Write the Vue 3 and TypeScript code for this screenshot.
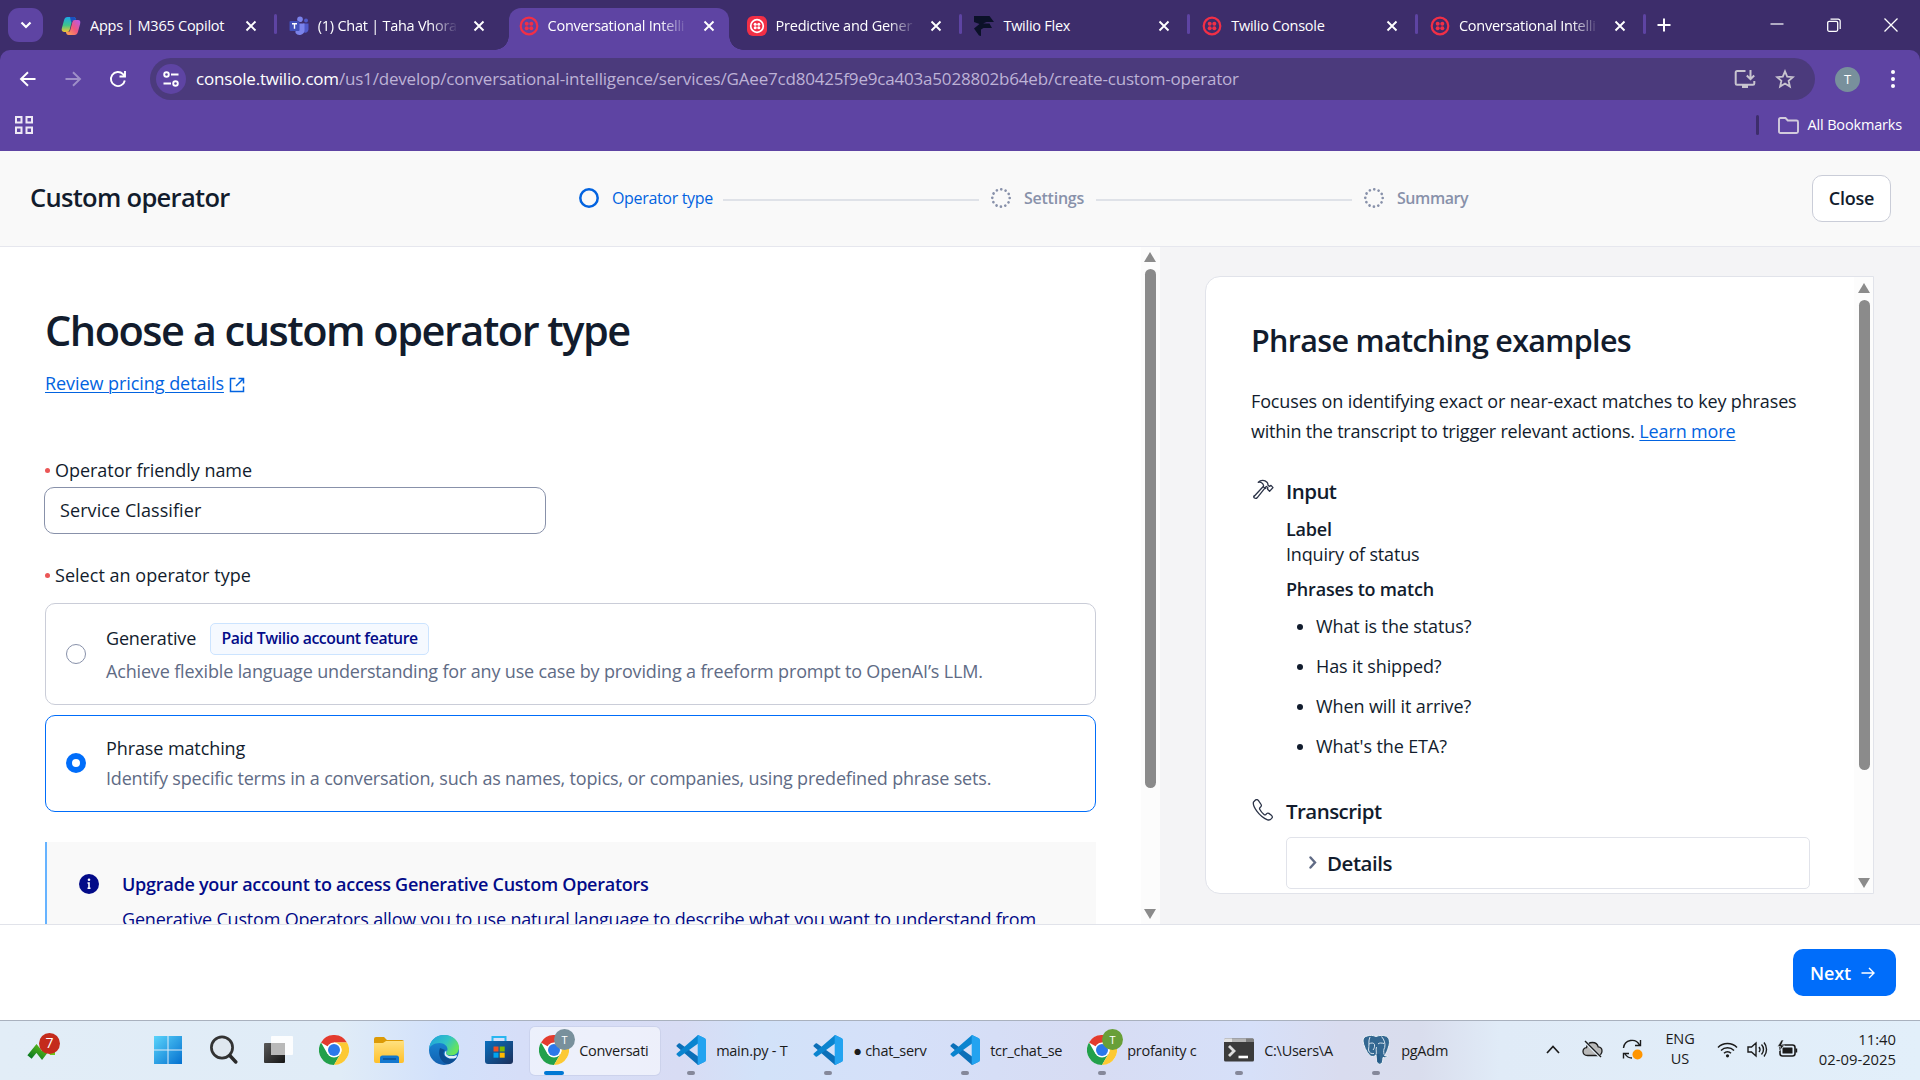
<script setup lang="ts">
interface Tab {
  title: string
  icon: string
  active?: boolean
  divider?: boolean
  faded?: boolean
}

interface Task {
  label: string
  icon: string
  badge?: string
  badgeTone?: string
  active?: boolean
}

const tabs: Tab[] = [
  { title: 'Apps | M365 Copilot', icon: 'copilot', divider: true },
  { title: '(1) Chat | Taha Vhora', icon: 'teams', faded: true },
  { title: 'Conversational Intelli', icon: 'twilio', active: true, faded: true },
  { title: 'Predictive and Gener', icon: 'twilio-solid', divider: true, faded: true },
  { title: 'Twilio Flex', icon: 'flex', divider: true },
  { title: 'Twilio Console', icon: 'twilio', divider: true },
  { title: 'Conversational Intelli', icon: 'twilio', divider: true, faded: true },
]

const pinned: string[] = ['windows', 'search', 'taskview', 'chrome', 'explorer', 'edge', 'store']

const tasks: Task[] = [
  { label: 'Conversati', icon: 'chrome', badge: 'T', badgeTone: 'slate', active: true },
  { label: 'main.py - T', icon: 'vscode' },
  { label: '● chat_serv', icon: 'vscode' },
  { label: 'tcr_chat_se', icon: 'vscode' },
  { label: 'profanity c', icon: 'chrome', badge: 'T', badgeTone: 'green' },
  { label: 'C:\\Users\\A', icon: 'terminal' },
  { label: 'pgAdm', icon: 'pgadmin' },
]

const phrases: string[] = ['What is the status?', 'Has it shipped?', 'When will it arrive?', "What's the ETA?"]
</script>

<template>
  <div class="screen">
    <svg class="sprite" aria-hidden="true">
      <defs>
        <linearGradient id="cpA" x1="0" y1="0" x2="0" y2="1"><stop offset="0" stop-color="#1ba7e8" /><stop offset=".55" stop-color="#3fc48a" /><stop offset="1" stop-color="#f5c531" /></linearGradient>
        <linearGradient id="cpB" x1="1" y1="0" x2="0" y2="1"><stop offset="0" stop-color="#b05cf0" /><stop offset=".5" stop-color="#f0567f" /><stop offset="1" stop-color="#ffb04a" /></linearGradient>
        <linearGradient id="winG" x1="0" y1="0" x2="1" y2="1"><stop offset="0" stop-color="#5ad4fb" /><stop offset="1" stop-color="#0470cf" /></linearGradient>
        <linearGradient id="dkG" x1="0" y1="0" x2="1" y2="1"><stop offset="0" stop-color="#5a5a5a" /><stop offset="1" stop-color="#151515" /></linearGradient>
        <linearGradient id="foG" x1="0" y1="0" x2="0" y2="1"><stop offset="0" stop-color="#ffe180" /><stop offset="1" stop-color="#ffc02a" /></linearGradient>
        <linearGradient id="edA" x1="0" y1="0" x2="1" y2=".5"><stop offset="0" stop-color="#1d9fe0" /><stop offset=".6" stop-color="#32c4c4" /><stop offset="1" stop-color="#66e45c" /></linearGradient>
        <linearGradient id="edB" x1="0" y1="0" x2="0" y2="1"><stop offset="0" stop-color="#1b8fdc" /><stop offset="1" stop-color="#1260b0" /></linearGradient>
        <linearGradient id="stG" x1="0" y1="0" x2="1" y2="1"><stop offset="0" stop-color="#0a6fbe" /><stop offset="1" stop-color="#1b2f5a" /></linearGradient>
        <linearGradient id="upG" x1="0" y1="1" x2="1" y2="0"><stop offset="0" stop-color="#0a7a22" /><stop offset="1" stop-color="#7fd314" /></linearGradient>
      </defs>
      <symbol id="i-copilot" viewBox="0 0 20 20">
        <path d="M6.500 1h6c1.300 0 1.900.7 2.200 1.700l.5 1.600h-2.600c-1 0-1.500.5-1.800 1.500L8.600 14c-.4 1.300-1.100 2-2.400 2H3C.9 16 .3 14.300.9 12.100L3.100 4C3.700 2 4.700 1 6.500 1z" fill="url(#cpA)" />
        <path d="M9 1h3.500c1.300 0 1.900.7 2.200 1.700l.5 1.600h-2.600c-1 0-1.500.5-1.800 1.500l-.5 1.500z" fill="#1b4fc0" />
        <path d="M13.500 19h-6c-1.300 0-1.900-.7-2.200-1.700L4.800 15.700h2.600c1 0 1.500-.5 1.800-1.500L11.400 6c.4-1.300 1.100-2 2.400-2H17c2.100 0 2.700 1.700 2.100 3.900L16.900 16c-.6 2-1.600 3-3.400 3z" fill="url(#cpB)" />
      </symbol>
      <symbol id="i-teams" viewBox="0 0 20 20">
        <circle cx="11" cy="3.200" r="2.800" fill="#7b83eb" /><circle cx="17" cy="4.400" r="2" fill="#5059c9" />
        <path d="M14 7.500h5.500v6a3.300 3.300 0 0 1-5.500 2.300z" fill="#5059c9" />
        <path d="M6.500 7.500h9V14a5 5 0 0 1-9 3z" fill="#7b83eb" />
        <rect x=".5" y="5" width="10" height="10" rx="1" fill="#4350b8" />
        <path d="M3 7.700h5M5.500 7.700v5" stroke="#fff" stroke-width="1.400" />
      </symbol>
      <symbol id="i-twilio" viewBox="0 0 20 20">
        <circle cx="10" cy="10" r="8.300" fill="none" stroke="#f22f46" stroke-width="2.200" />
        <g fill="#f22f46"><circle cx="7.700" cy="7.700" r="2" /><circle cx="12.300" cy="7.700" r="2" /><circle cx="7.700" cy="12.300" r="2" /><circle cx="12.300" cy="12.300" r="2" /></g>
      </symbol>
      <symbol id="i-twilio-solid" viewBox="0 0 20 20">
        <rect width="20" height="20" rx="6" fill="#f22f46" />
        <circle cx="10" cy="10" r="6.300" fill="none" stroke="#fff" stroke-width="1.700" />
        <g fill="#fff"><circle cx="8.200" cy="8.200" r="1.500" /><circle cx="11.800" cy="8.200" r="1.500" /><circle cx="8.200" cy="11.800" r="1.500" /><circle cx="11.800" cy="11.800" r="1.500" /></g>
      </symbol>
      <symbol id="i-flex" viewBox="0 0 20 20">
        <path d="M0 0h15.500L20 6h-7.500L9 7.500h6.500L18 12H9.500L7 13.500V20l-2-.5L0 12.500 5.500 8 0 6z" fill="#0b1128" />
      </symbol>
      <symbol id="i-windows" viewBox="0 0 30 30">
        <path d="M1 1h13.500v13.500H1zM15.500 1H29v13.500H15.500zM1 15.500h13.500V29H1zM15.500 15.500H29V29H15.500z" fill="url(#winG)" />
      </symbol>
      <symbol id="i-search" viewBox="0 0 30 30">
        <circle cx="14" cy="12.500" r="10.600" fill="#dfe7ef" stroke="#333" stroke-width="2.700" />
        <path d="M21.800 20.500l6 6.500" stroke="#2a2a2a" stroke-width="3.400" stroke-linecap="round" />
      </symbol>
      <symbol id="i-taskview" viewBox="0 0 30 30">
        <rect x="1" y="8" width="21" height="20" rx="1" fill="url(#dkG)" />
        <rect x="8" y="1" width="22" height="19" rx="1" fill="#fff" fill-opacity=".88" />
        <path d="M8 8h14v12H8z" fill="#b9b9b9" />
      </symbol>
      <symbol id="i-chrome" viewBox="0 0 30 30">
        <circle cx="15" cy="15" r="15" fill="#fff" />
        <path d="M15 15L2 7.500A15 15 0 0 1 28 7.500H15z" fill="#e33b2e" />
        <path d="M2 7.500A15 15 0 0 0 15 30l6.500-11.200L15 15 8.500 18.800z" fill="#22a04b" />
        <path d="M28 7.500A15 15 0 0 1 15 30l6.500-11.300A7.500 7.500 0 0 0 21.500 11L15 7.500z" fill="#fcc934" />
        <circle cx="15" cy="15" r="7.500" fill="#fff" /><circle cx="15" cy="15" r="6" fill="#2b78ea" />
      </symbol>
      <symbol id="i-explorer" viewBox="0 0 30 30">
        <path d="M0 4a2 2 0 0 1 2-2h8l3 3h15a2 2 0 0 1 2 2v5H0z" fill="#dc9a06" />
        <path d="M0 8h9l3-2h18v20a2 2 0 0 1-2 2H2a2 2 0 0 1-2-2z" fill="url(#foG)" />
        <path d="M6 28v-5a2.500 2.500 0 0 1 2.500-2.500h14A2.500 2.500 0 0 1 25 23v5z" fill="#1378cf" /><path d="M9 24h13" stroke="#0b4f94" stroke-width="1.500" />
      </symbol>
      <symbol id="i-edge" viewBox="0 0 30 30">
        <circle cx="15" cy="15" r="15" fill="url(#edB)" />
        <path d="M0 14C1 5 7 0 15 0c9 0 15 6 15 12.500 0 5-3.500 8-8 8-3 0-5-1-5-2.500 0-1 1.500-1.500 1.500-4C18.500 11 15 8 10.500 8 5 8 1 11 0 14z" fill="url(#edA)" />
        <path d="M11 13c-3 7 1.500 15.500 8.500 16.300 4-1.300 7-4 8.500-7-3.500 2-8 2.200-11 0C14 20 14 17 16 15z" fill="#0c4d92" />
        <path d="M17 18c0 3 6 4 10 2.200.8-.2 1.300.3.800 1.100l-.8 1.400C23 24.500 18 23.500 16 20.500c-1-2 0-4.500 1.500-5z" fill="#e4effa" />
      </symbol>
      <symbol id="i-store" viewBox="0 0 30 30">
        <path d="M8.500 6V2h13v4" fill="none" stroke="#29b6f0" stroke-width="2" />
        <path d="M1 6h28v20a3 3 0 0 1-3 3H4a3 3 0 0 1-3-3z" fill="url(#stG)" />
        <path d="M9.500 11.500h5v5h-5z" fill="#f25022" /><path d="M15.700 11.500h5v5h-5z" fill="#7fba00" /><path d="M9.500 17.700h5v5h-5z" fill="#00a4ef" /><path d="M15.700 17.700h5v5h-5z" fill="#ffb900" />
      </symbol>
      <symbol id="i-vscode" viewBox="0 0 30 30">
        <path d="M.7 10.200L2.600 8.500c.5-.4 1-.4 1.500 0L29 26.500 22 30 .7 11.500c-.4-.4-.4-.9 0-1.300z" fill="#0b6fb8" />
        <path d="M.7 19.800l1.900 1.700c.5.400 1 .4 1.500 0L29 3.500 22 0 .7 18.500c-.4.400-.4.900 0 1.300z" fill="#0a84cf" />
        <path d="M22 0l7 3.200c.6.300 1 .9 1 1.600v20.400c0 .7-.4 1.300-1 1.600L22 30c-.5-.3-.3-.7-.3-1.500V1.500C21.700.7 21.500.3 22 0z" fill="#23a3f0" />
      </symbol>
      <symbol id="i-terminal" viewBox="0 0 30 30">
        <rect y="3.500" width="30" height="23" rx="1.500" fill="#3b3b3b" /><path d="M1.500 3.500h27A1.500 1.500 0 0 1 30 5v2H0V5a1.500 1.500 0 0 1 1.500-1.500z" fill="#b5b5b5" /><path d="M0 5a1.500 1.500 0 0 1 1.500-1.500H8V7H0z" fill="#e2e2e2" /><path d="M22 3.500h6.500A1.500 1.500 0 0 1 30 5v2h-8z" fill="#808080" />
        <path d="M5 11l5 5-5 5" fill="none" stroke="#ddd" stroke-width="2.800" /><path d="M14.500 22h9.500" stroke="#fff" stroke-width="2.600" />
      </symbol>
      <symbol id="i-pgadmin" viewBox="0 0 30 30">
        <path d="M6 1c3-1 6-.8 9 .5C18 .3 22-.3 25.500 1.300 29 3.500 29 8 27.500 12c-.8 3-2 6-4 8.500.8.700 2.500.6 3.600.7-1 1.500-3.300 1.700-5.100 1.300-.3 2 0 5-2 6.500-2 .9-3.800-.5-4-2.500L15.300 20c-1.600 1.500-4 1.900-6 1C5 17 2.500 10 2 6 2 3 3.500 1.700 6 1z" fill="#336791" stroke="#eef3f8" stroke-width="1" />
        <path d="M9 2C7 6 8.500 10 7.500 15c.5 3 3 4 5.500 3.500M20.500 1.500c3 3.500 4 7 3.200 11-1.200 2-1.200 4-.7 7M15 20c1-3-.5-5 .5-8M8 9c2-1.500 5-1.300 5.500.5.300 2.500-.3 4-1.500 5.500M17 9c1-1.500 4-1 6-.5" fill="none" stroke="#e8eff6" stroke-width=".9" />
        <path d="M17 19l.8 8" stroke="#245a87" stroke-width="3" />
      </symbol>
    </svg>

    <div class="tabstrip">
      <button class="tab-search"><svg width="14" height="14" viewBox="0 0 14 14"><path d="M2.500 4.500L7 9l4.500-4.500" fill="none" stroke="#fff" stroke-width="2.200" /></svg></button>
      <div class="tabs">
        <div v-for="(tab, i) in tabs" :key="i" class="tab" :class="{ active: tab.active, divider: tab.divider }">
          <svg class="favicon"><use :href="'#i-' + tab.icon" /></svg>
          <span class="tab-title" :class="{ faded: tab.faded }">{{ tab.title }}</span>
          <svg class="tab-close" width="12" height="12" viewBox="0 0 12 12"><path d="M1.500 1.500l9 9M10.500 1.500l-9 9" stroke="#fff" stroke-width="1.900" /></svg>
        </div>
      </div>
      <svg class="plus" width="14" height="14" viewBox="0 0 14 14"><path d="M7 .5v13M.5 7h13" stroke="#fff" stroke-width="2" /></svg>
      <div class="window-buttons">
        <svg width="14" height="14" viewBox="0 0 14 14"><path d="M.5 6h13" stroke="#fff" stroke-width="1.200" /></svg>
        <svg width="14" height="14" viewBox="0 0 14 14"><rect x=".7" y="3.300" width="10" height="10" rx="1.500" fill="none" stroke="#fff" stroke-width="1.300" /><path d="M3.500 1.200H11a2 2 0 0 1 2.200 2V11" fill="none" stroke="#fff" stroke-width="1.200" /></svg>
        <svg width="14" height="14" viewBox="0 0 14 14"><path d="M.5 .5l13 13M13.500 .5l-13 13" stroke="#fff" stroke-width="1.300" /></svg>
      </div>
    </div>

    <div class="browser-bar">
      <div class="toolbar">
        <svg class="nav" viewBox="0 0 20 20"><path d="M17.500 10H3.500M10 3.200L3 10l7 6.800" fill="none" stroke="#fff" stroke-width="1.900" /></svg>
        <svg class="nav dim" viewBox="0 0 20 20"><path d="M2.500 10h14M10 3.200l7 6.800-7 6.800" fill="none" stroke="#fff" stroke-width="1.900" /></svg>
        <svg class="nav" viewBox="0 0 20 20"><path d="M16.800 11.500A7 7 0 1 1 15 5.200l1.500 1.600M17 2v5.500h-5.500" fill="none" stroke="#fff" stroke-width="1.900" /></svg>
        <div class="omnibox">
          <span class="site-info"><svg width="18" height="18" viewBox="0 0 18 18"><g fill="none" stroke="#fff" stroke-width="1.900"><circle cx="4.500" cy="4.500" r="2.300" /><path d="M9 4.500h7.500M1.500 13.500H9" /><circle cx="13.500" cy="13.500" r="2.300" /></g></svg></span>
          <span class="url"><b>console.twilio.com</b>/us1/develop/conversational-intelligence/services/GAee7cd80425f9e9ca403a5028802b64eb/create-custom-operator</span>
          <svg class="omni-icon" width="22" height="20" viewBox="0 0 22 20"><path d="M11.500 2H3.200C2.200 2 1.700 2.500 1.700 3.500v11c0 .8.500 1.300 1.300 1.300h16c.8 0 1.300-.5 1.300-1.300V12M16.500 1v9M12.800 6.500l3.700 3.700 3.700-3.700" fill="none" stroke="#c8c4cf" stroke-width="2" /><path d="M8 16h6v3H8z" fill="#c8c4cf" /></svg>
          <svg class="omni-icon star" width="20" height="20" viewBox="0 0 20 20"><path d="M10 2.300l2.200 5.300 5.700.5-4.300 3.700 1.300 5.700L10 14.500l-4.900 3 1.300-5.700L2.100 8.100l5.700-.5z" fill="none" stroke="#c8c4cf" stroke-width="1.800" /></svg>
        </div>
        <span class="avatar">T</span>
        <svg class="kebab" width="6" height="20" viewBox="0 0 6 20"><g fill="#fff"><circle cx="3" cy="3" r="2" /><circle cx="3" cy="10" r="2" /><circle cx="3" cy="17" r="2" /></g></svg>
      </div>
      <div class="bookmarks">
        <svg width="18" height="18" viewBox="0 0 18 18"><g fill="none" stroke="#eee9f5" stroke-width="2"><path d="M1 1h5.500v5.500H1zM11.500 1H17v5.500h-5.500zM1 11.500h5.500V17H1zM11.500 11.500H17V17h-5.500z" /></g></svg>
        <span class="bookmark-divider"></span>
        <svg width="21" height="17" viewBox="0 0 21 17"><path d="M1 2.500C1 1.500 1.500 1 2.500 1h5l2.300 2.500h8.700c1 0 1.500.5 1.500 1.500v9.500c0 1-.5 1.500-1.500 1.500h-16C1.500 16 1 15.500 1 14.500z" fill="none" stroke="#d2cbdc" stroke-width="1.900" /></svg>
        <span class="bookmark-label">All Bookmarks</span>
      </div>
    </div>

    <header class="page-header">
      <span class="page-title">Custom operator</span>
      <div class="steps">
        <svg class="ring" viewBox="0 0 20 20"><circle cx="10" cy="10" r="8.700" fill="none" stroke="#0263e0" stroke-width="2.500" /></svg>
        <span class="step-label current">Operator type</span>
        <span class="step-line"></span>
        <svg class="ring" viewBox="0 0 20 20"><circle cx="10" cy="10" r="8.700" fill="none" stroke="#8891aa" stroke-width="2.700" stroke-linecap="round" stroke-dasharray="0.010 4.545" /></svg>
        <span class="step-label settings">Settings</span>
        <span class="step-line"></span>
        <svg class="ring" viewBox="0 0 20 20"><circle cx="10" cy="10" r="8.700" fill="none" stroke="#8891aa" stroke-width="2.700" stroke-linecap="round" stroke-dasharray="0.010 4.545" /></svg>
        <span class="step-label summary">Summary</span>
      </div>
      <button class="close-button">Close</button>
    </header>

    <main class="main">
      <section class="left">
        <div class="left-content">
          <h1>Choose a custom operator type</h1>
          <div class="pricing"><a>Review pricing details</a><svg width="16" height="16" viewBox="0 0 16 16"><path d="M6.500 1.500H1.500v13h13V9.500M9.500 1.500h5v5M14.500 1.500L7 9" fill="none" stroke="#0263e0" stroke-width="1.500" /></svg></div>
          <div class="field-label"><i></i>Operator friendly name</div>
          <div class="input">Service Classifier</div>
          <div class="field-label second"><i></i>Select an operator type</div>
          <div class="option">
            <span class="radio"></span>
            <div>
              <div class="option-head"><span>Generative</span><span class="badge">Paid Twilio account feature</span></div>
              <p class="option-text first">Achieve flexible language understanding for any use case by providing a freeform prompt to OpenAI’s LLM.</p>
            </div>
          </div>
          <div class="option selected">
            <span class="radio checked"></span>
            <div>
              <div class="option-title">Phrase matching</div>
              <p class="option-text">Identify specific terms in a conversation, such as names, topics, or companies, using predefined phrase sets.</p>
            </div>
          </div>
          <div class="callout">
            <svg width="20" height="20" viewBox="0 0 20 20"><circle cx="10" cy="10" r="10" fill="#030b88" /><circle cx="10" cy="5.800" r="1.300" fill="#fff" /><path d="M8.500 9H10v5M8.500 14.300h3" fill="none" stroke="#fff" stroke-width="1.600" /></svg>
            <div>
              <div class="callout-title">Upgrade your account to access Generative Custom Operators</div>
              <p class="callout-text">Generative Custom Operators allow you to use natural language to describe what you want to understand from</p>
            </div>
          </div>
        </div>
        <div class="scrollbar"><i class="up"></i><span class="thumb"></span><i class="down"></i></div>
      </section>

      <aside class="right">
        <div class="card">
          <div class="card-content">
            <h2>Phrase matching examples</h2>
            <p class="intro">Focuses on identifying exact or near-exact matches to key phrases<br /><span class="second-line">within the transcript to trigger relevant actions. </span><a>Learn more</a></p>
            <div class="section-head">
              <svg width="22" height="22" viewBox="0 0 22 22"><path d="M2.200 17.300L11 7.800c.8-.8.600-2-.200-3C9.700 3.600 8.200 3 6.300 3.300 8.500 1 12.500.6 15 3.200c.8.800 1 1.800.9 2.800l1.600 1.400 1.500-1 2 2.200-3.400 3.600-2-2 .2-1.600-1.500-1.200-9.200 11.400c-.8.900-2 .8-2.700.1-.9-.7-.9-1.400-.2-2.100zM11 7.800l3.300 2" fill="none" stroke="#2c3448" stroke-width="1.300" stroke-linejoin="round" /></svg>
              <span>Input</span>
            </div>
            <div class="detail">
              <b>Label</b>
              <div>Inquiry of status</div>
              <b class="phrases-title">Phrases to match</b>
              <ul><li v-for="phrase in phrases" :key="phrase">{{ phrase }}</li></ul>
            </div>
            <div class="section-head">
              <svg width="22" height="22" viewBox="0 0 22 22"><path d="M3.200 1.200L1.500 3C.2 7 7 17.500 15.500 20.800c2 .6 3.500-.3 4.500-1.800.6-.9.400-1.700-.3-2.400l-2.800-2.200c-.8-.5-1.600-.4-2.200.2l-1 1.100c-.6.4-1.200.2-1.700-.2-2-1.600-3.300-3.300-4.300-5.200-.3-.6-.2-1.100.2-1.600l1-1.100c.6-.6.7-1.300.2-2.100L6.500 1.600c-1-1.400-2.300-1.300-3.300-.4z" fill="none" stroke="#2c3448" stroke-width="1.300" /></svg>
              <span>Transcript</span>
            </div>
            <div class="details"><svg width="8" height="13" viewBox="0 0 8 13"><path d="M1.500 1.500l4.500 5-4.500 5" fill="none" stroke="#606b85" stroke-width="2.400" stroke-linecap="round" /></svg><span>Details</span></div>
          </div>
          <div class="scrollbar card-bar"><i class="up"></i><span class="thumb"></span><i class="down"></i></div>
        </div>
      </aside>
    </main>

    <footer class="footer">
      <button class="next">Next<svg width="14" height="14" viewBox="0 0 14 14"><path d="M.5 7h12.500M8 2l5 5-5 5" fill="none" stroke="#fff" stroke-width="1.400" /></svg></button>
    </footer>

    <div class="taskbar">
      <div class="widget">
        <svg width="30" height="20" viewBox="0 0 30 20"><path d="M2.500 17L9.500 8.500l5.500 7L24.500 3" fill="none" stroke="url(#upG)" stroke-width="5.500" /><path d="M16 1h12v14h-5z" fill="#6cc81a" /></svg>
        <span>7</span>
      </div>
      <div class="pinned"><svg v-for="name in pinned" :key="name" class="app"><use :href="'#i-' + name" /></svg></div>
      <div class="tasks">
        <div v-for="(task, i) in tasks" :key="i" class="task" :class="{ active: task.active }">
          <svg class="app"><use :href="'#i-' + task.icon" /></svg>
          <span v-if="task.badge" class="task-badge" :class="task.badgeTone">{{ task.badge }}</span>
          <span class="task-label">{{ task.label }}</span>
          <span class="indicator"></span>
        </div>
      </div>
      <div class="tray">
        <svg class="t-up" width="14" height="9" viewBox="0 0 14 9"><path d="M1 8l6-6.500L13 8" fill="none" stroke="#1b1b1b" stroke-width="1.700" /></svg>
        <svg class="t-cloud" width="21" height="18" viewBox="0 0 21 18"><path d="M5.500 15.500C2.500 15.500 1 13.500 1 11.500S2.500 8 4.500 7.700C5 4.500 7.500 2.500 10.500 2.500s5 1.500 5.700 4.300C18.500 7 20 8.800 20 11s-1.700 4.500-4 4.500z" fill="#b9b9b9" stroke="#1b1b1b" stroke-width="1.300" /><path d="M3 1.500l16 16" stroke="#e3eef9" stroke-width="3" /><path d="M3 1l16 16" stroke="#1b1b1b" stroke-width="1.400" /></svg>
        <svg class="t-sync" width="21" height="21" viewBox="0 0 21 21"><path d="M1.500 9A8.500 8.500 0 0 1 17.500 6M18.500 1v5.500H13M10 19A8.500 8.500 0 0 1 3 15M1.500 19.500V14.500H7" fill="none" stroke="#1b1b1b" stroke-width="1.400" /><circle cx="15.500" cy="15.500" r="5" fill="#ff9500" /></svg>
        <div class="lang">ENG<br />US</div>
        <svg class="t-wifi" width="21" height="17" viewBox="0 0 21 17"><g fill="none" stroke="#1b1b1b" stroke-width="1.500"><path d="M1 6.500a13.500 13.500 0 0 1 19 0M4 9.500a9.200 9.200 0 0 1 13 0M7 12.300a5 5 0 0 1 7 0" /></g><circle cx="10.500" cy="14.800" r="1.600" fill="#1b1b1b" /></svg>
        <svg class="t-vol" width="21" height="17" viewBox="0 0 21 17"><g fill="none" stroke="#1b1b1b" stroke-width="1.400"><path d="M1 6h3.500L9 2v13l-4.500-4H1zM12 6a4 4 0 0 1 0 5M14.500 3.500a7.300 7.300 0 0 1 0 10M17 1.500a11 11 0 0 1 0 14" /></g></svg>
        <svg class="t-batt" width="21" height="18" viewBox="0 0 21 18"><rect x="3" y="5" width="15" height="11" rx="2.500" fill="none" stroke="#1b1b1b" stroke-width="1.600" /><rect x="5.500" y="7.500" width="10" height="6" rx=".5" fill="#1b1b1b" /><path d="M18.500 8.500h1.700v4h-1.700z" fill="#1b1b1b" /><path d="M4.500 0L.5 6.500h3L2.500 11l5-6h-3L6.500 0z" fill="#1b1b1b" stroke="#e3eef9" stroke-width=".6" /></svg>
        <div class="clock">11:40<br />02-09-2025</div>
      </div>
    </div>
  </div>
</template>

<style>
body {
  margin: 0;
  overflow: hidden;
}
</style>

<style scoped>
* {
  box-sizing: border-box;
}
.screen {
  width: 1920px;
  height: 1080px;
  display: flex;
  flex-direction: column;
  overflow: hidden;
  background: #fff;
  color: #121c2d;
  font-family: 'Open Sans', 'Noto Sans', sans-serif;
  font-size: 14px;
}
.page-header,
.main,
.footer {
  font-size: 18px;
  letter-spacing: -0.165px;
}
.sprite {
  position: absolute;
  width: 0;
  height: 0;
}
button {
  font: inherit;
  letter-spacing: inherit;
  padding: 0;
  border: 0;
}
h1,
h2,
p,
ul {
  margin: 0;
  padding: 0;
}
svg,
i {
  flex: none;
}

/* browser chrome */
.tabstrip {
  height: 50px;
  flex: none;
  display: flex;
  align-items: center;
  background: #3d2d6b;
  padding-left: 8px;
}
.tab-search {
  width: 35px;
  height: 34px;
  border-radius: 11px;
  background: #5e44a3;
  display: flex;
  align-items: center;
  justify-content: center;
}
.tabs {
  display: flex;
  align-self: stretch;
  align-items: flex-end;
  margin-left: 6px;
}
.tab {
  position: relative;
  width: 227.800px;
  height: 42px;
  padding: 0 20px 7px 12px;
  display: flex;
  align-items: center;
}
.tab .favicon {
  width: 20px;
  height: 20px;
}
.tab-title {
  width: 142px;
  margin-left: 9px;
  overflow: hidden;
  white-space: nowrap;
  font-size: 14.500px;
  line-height: 20px;
  letter-spacing: -0.250px;
  color: #fff;
}
.tab-title.faded {
  mask-image: linear-gradient(90deg, #000 112px, transparent 140px);
}
.tab-close {
  margin-left: 13.500px;
}
.tab.active {
  background: #5e44a3;
  border-radius: 12px 12px 0 0;
  width: 220px;
  margin: 0 6px 0 4px;
  padding: 0 13px 7px 10px;
}
.tab.active::before,
.tab.active::after {
  content: '';
  position: absolute;
  bottom: 0;
  width: 14px;
  height: 14px;
}
.tab.active::before {
  left: -14px;
  background: radial-gradient(circle at 0 0, transparent 13.500px, #5e44a3 14px);
}
.tab.active::after {
  right: -14px;
  background: radial-gradient(circle at 100% 0, transparent 13.500px, #5e44a3 14px);
}
.tab.divider::after {
  content: '';
  position: absolute;
  right: 0;
  top: 6px;
  width: 3px;
  height: 20px;
  border-radius: 2px;
  background: #5e44a3;
}
.plus {
  margin-left: 11px;
}
.window-buttons {
  display: flex;
  gap: 43px;
  margin-left: auto;
  margin-right: 22px;
}
.browser-bar {
  height: 101px;
  flex: none;
  background: #3d2d6b;
}
.toolbar {
  height: 54px;
  background: #5e44a3;
  border-radius: 10px 10px 0 0;
  display: flex;
  align-items: center;
  padding: 4px 24px 0 18px;
}
.nav {
  width: 20px;
  height: 20px;
  margin-right: 25px;
}
.dim {
  opacity: 0.400;
}
.omnibox {
  width: 1665px;
  height: 42px;
  border-radius: 21px;
  background: #4b3a7c;
  display: flex;
  align-items: center;
  margin-left: -3px;
}
.site-info {
  width: 30px;
  height: 30px;
  border-radius: 50%;
  background: #5e44a3;
  display: flex;
  align-items: center;
  justify-content: center;
  margin-left: 6px;
}
.url {
  margin-left: 10px;
  font-size: 17px;
  line-height: 24px;
  letter-spacing: -0.190px;
  color: #bdb2d6;
  white-space: nowrap;
}
.url b {
  font-weight: 400;
  color: #fff;
}
.omni-icon {
  margin-left: auto;
}
.star {
  margin: 0 20px 0 19px;
}
.avatar {
  width: 25px;
  height: 25px;
  border-radius: 50%;
  background: #78909c;
  color: #fff;
  font-size: 13px;
  line-height: 25px;
  text-align: center;
  margin-left: 20px;
}
.kebab {
  margin-left: auto;
}
.bookmarks {
  height: 47px;
  background: #5e44a3;
  display: flex;
  align-items: center;
  padding: 0 18px 5px 15px;
}
.bookmark-divider {
  width: 3px;
  height: 20px;
  border-radius: 2px;
  background: #3d2d6b;
  margin-left: auto;
  margin-right: 19px;
}
.bookmark-label {
  margin-left: 9px;
  margin-top: -2px;
  color: #fff;
  font-size: 14.500px;
  letter-spacing: -0.170px;
}

/* page header */
.page-header {
  height: 96px;
  flex: none;
  background: #f9f9f9;
  border-bottom: 1px solid #e6e7ee;
  display: flex;
  align-items: center;
  padding: 0 29px 1px 30px;
}
.page-title {
  width: 549px;
  margin-top: -3px;
  font-size: 25.500px;
  font-weight: 600;
  letter-spacing: -0.690px;
}
.steps {
  display: flex;
  align-items: center;
}
.ring {
  width: 20px;
  height: 20px;
  overflow: visible;
}
.step-label {
  margin: -1px 10px 0 13px;
  font-size: 16px;
  font-weight: 600;
  width: 62px;
  letter-spacing: -0.250px;
  color: #8891aa;
  white-space: nowrap;
}
.step-label.current {
  width: 101px;
  font-weight: 500;
  letter-spacing: -0.330px;
  color: #0263e0;
}
.step-label.summary {
  letter-spacing: -0.450px;
}
.step-line {
  width: 256px;
  height: 2px;
  margin-top: 3px;
  margin-right: 12px;
  background: #dfe2e8;
}
.close-button {
  width: 79px;
  height: 47px;
  margin-left: auto;
  border: 1px solid #cacdd8;
  border-radius: 10px;
  background: #fff;
  font-weight: 600;
  letter-spacing: -0.200px;
  color: #121c2d;
}

/* content */
.main {
  height: 677px;
  flex: none;
  display: flex;
}
.left {
  width: 1160px;
  height: 677px;
  display: flex;
  overflow: hidden;
}
.left-content {
  width: 1141px;
  padding: 57px 45px 0;
  flex: none;
}
h1 {
  font-size: 41.500px;
  font-weight: 600;
  line-height: 52px;
  letter-spacing: -1.500px;
  white-space: nowrap;
}
.pricing {
  display: flex;
  align-items: center;
  gap: 5px;
  height: 30px;
  margin-top: 12px;
  letter-spacing: -0.060px;
}
.pricing svg {
  margin-top: 4px;
}
a {
  color: #0263e0;
  text-decoration: underline;
  text-decoration-thickness: 1px;
  text-underline-offset: 2px;
}
.field-label {
  display: flex;
  align-items: center;
  gap: 5px;
  line-height: 24px;
  margin-top: 60px;
  letter-spacing: -0.040px;
}
.field-label i {
  width: 5px;
  height: 5px;
  border-radius: 50%;
  background: #eb5656;
}
.input {
  width: 502px;
  height: 47px;
  margin: 5px 0 0 -1px;
  border: 1px solid #8891aa;
  border-radius: 10px;
  padding-left: 15px;
  line-height: 44px;
  letter-spacing: 0.080px;
}
.second {
  margin-top: 29px;
  letter-spacing: 0.030px;
}
.option {
  display: flex;
  align-items: center;
  height: 102px;
  margin-top: 16px;
  border: 1px solid #cacdd8;
  border-radius: 10px;
  padding-left: 20px;
  white-space: nowrap;
}
.option.selected {
  height: 97px;
  margin-top: 10px;
  padding-bottom: 2px;
  border-color: #006dfa;
}
.option.selected .option-text {
  letter-spacing: -0.180px;
}
.radio {
  width: 20px;
  height: 20px;
  margin-right: 20px;
  border: 1px solid #8891aa;
  border-radius: 50%;
}
.radio.checked {
  border: 6px solid #006dfa;
}
.option-head {
  display: flex;
  align-items: center;
  height: 32px;
}
.option-head > span:first-child {
  margin-top: -2px;
}
.badge {
  margin-left: 14px;
  width: 219px;
  height: 32px;
  line-height: 28px;
  text-align: center;
  border: 1px solid #cce4ff;
  border-radius: 5px;
  background: #f5f9ff;
  color: #030b88;
  font-size: 15.800px;
  font-weight: 600;
  letter-spacing: -0.400px;
}
.option-title {
  line-height: 30px;
  letter-spacing: -0.100px;
}
.option-text {
  line-height: 30px;
  color: #606b85;
}
.option-text.first {
  margin-top: 1px;
}
.callout {
  display: flex;
  margin-top: 30px;
  height: 140px;
  padding: 27px 0 0 32px;
  border-left: 2px solid #66b3ff;
  background: #f9f9f9;
  color: #030b88;
  white-space: nowrap;
}
.callout svg {
  margin: 5px 23px 0 0;
}
.callout-title {
  font-weight: 600;
  line-height: 30px;
  letter-spacing: -0.260px;
}
.callout-text {
  margin-top: 5px;
  line-height: 30px;
  letter-spacing: -0.185px;
}
.scrollbar {
  width: 19px;
  flex: none;
  background: #fcfcfc;
  display: flex;
  flex-direction: column;
  align-items: center;
  padding: 5px 1px 5px 0;
}
.scrollbar i {
  border: 6.500px solid transparent;
}
.scrollbar .up {
  border-top: 0;
  border-bottom: 10px solid #8b8b8b;
}
.scrollbar .down {
  margin-top: auto;
  border-bottom: 0;
  border-top: 10px solid #8b8b8b;
}
.thumb {
  width: 11px;
  height: 519px;
  margin-top: 7px;
  border-radius: 6px;
  background: #8b8b8b;
}
.right {
  width: 760px;
  background: #f4f4f6;
  padding: 29px 46px 0 45px;
}
.card {
  height: 618px;
  display: flex;
  overflow: hidden;
  border: 1px solid #e1e3ea;
  border-radius: 15px 0 0 15px;
  background: #fff;
}
.card-content {
  flex: 1;
  padding: 43px 45px 0;
}
.card-bar {
  padding: 6px 0 5px 1px;
}
.card-bar .thumb {
  height: 470px;
}
h2 {
  font-size: 30.500px;
  font-weight: 600;
  line-height: 40px;
  letter-spacing: -0.690px;
  white-space: nowrap;
}
.intro {
  margin-top: 26px;
  line-height: 30px;
  letter-spacing: -0.140px;
  white-space: nowrap;
}
.second-line {
  letter-spacing: -0.210px;
}
.section-head {
  display: flex;
  gap: 12px;
  margin: 31px 0 0 1px;
  font-size: 20.500px;
  font-weight: 600;
  line-height: 28px;
  letter-spacing: -0.550px;
}
.section-head svg {
  margin-top: 2px;
}
.detail {
  padding: 12px 0 0 35px;
  line-height: 25px;
}
.detail b {
  display: block;
  font-weight: 600;
  letter-spacing: -0.200px;
}
.detail .phrases-title {
  margin-top: 10px;
}
ul {
  list-style: none;
  margin-top: 4px;
  line-height: 40px;
  letter-spacing: -0.120px;
}
li {
  display: flex;
  align-items: center;
}
li::before {
  content: '';
  width: 6px;
  height: 6px;
  margin: 2px 13px 0 11px;
  border-radius: 50%;
  background: #121c2d;
}
.details {
  display: flex;
  align-items: center;
  gap: 10px;
  height: 52px;
  margin: 12px -1px 0 35px;
  padding: 0 0 1px 22px;
  border: 1px solid #e1e3ea;
  border-radius: 5px;
  font-size: 20.500px;
  font-weight: 600;
  letter-spacing: -0.450px;
}
.footer {
  height: 96px;
  flex: none;
  border-top: 1px solid #e1e3ea;
  display: flex;
  justify-content: flex-end;
  padding: 24px 24px 0;
}
.next {
  width: 103px;
  height: 47px;
  border-radius: 10px;
  background: #006dfa;
  color: #fff;
  font-weight: 600;
  display: flex;
  align-items: center;
  justify-content: center;
  gap: 10px;
  padding-right: 4px;
}

/* taskbar */
.taskbar {
  height: 61px;
  flex: none;
  display: flex;
  border-top: 1px solid #a9b1be;
  background: linear-gradient(90deg, #e2edf7 0, #e0ecf7 340px, #d2e1fb 440px, #d6def8 520px, #d8dcf4 680px, #d2e2f9 760px, #d5e0f9 900px, #d7dcf3 1090px, #d6e0f9 1250px, #d9dcef 1340px, #d9dded 1420px, #e0ebf7 1500px, #e2effa 1920px);
  color: #1b1b1b;
}
.widget {
  position: relative;
  width: 153px;
  padding: 19px 0 0 27px;
}
.widget span {
  position: absolute;
  left: 39px;
  top: 12px;
  width: 21px;
  height: 21px;
  border-radius: 50%;
  background: #c42b1c;
  color: #fff;
  text-align: center;
  line-height: 20px;
}
.app {
  width: 30px;
  height: 30px;
}
.pinned {
  display: flex;
  gap: 25.200px;
  padding-top: 14px;
}
.tasks {
  display: flex;
  gap: 7px;
  padding-top: 6px;
  margin-left: 16px;
}
.task {
  position: relative;
  width: 130px;
  height: 48px;
  display: flex;
  padding: 8px 0 0 9px;
  border-radius: 5px;
}
.task.active {
  background: rgba(255, 255, 255, 0.550);
  box-shadow: 0 0 0 1px rgba(160, 170, 200, 0.200);
}
.task-label {
  width: 76px;
  margin: 4px 0 0 10px;
  line-height: 24px;
  height: 24px;
  white-space: nowrap;
  font-size: 14.500px;
  letter-spacing: -0.250px;
}
.task-badge {
  position: absolute;
  left: 24px;
  top: 2px;
  width: 21px;
  height: 21px;
  border-radius: 50%;
  color: #fff;
  text-align: center;
  font-size: 11px;
  line-height: 21px;
}
.slate {
  background: #78909c;
}
.green {
  background: #689f38;
}
.indicator {
  position: absolute;
  left: 20px;
  bottom: 0;
  width: 8px;
  height: 4px;
  border-radius: 2px;
  background: #85889a;
}
.task.active .indicator {
  left: 14px;
  width: 20px;
  background: #0078d4;
}
.tray {
  display: flex;
  align-items: center;
  flex: 1;
  justify-content: flex-end;
  padding: 0 24px 4px 0;
}
.t-cloud {
  margin-left: 22px;
}
.t-sync {
  margin-left: 19px;
}
.lang {
  width: 34px;
  margin-left: 20px;
  text-align: center;
  line-height: 20px;
  font-size: 14.500px;
  letter-spacing: -0.100px;
}
.t-wifi {
  margin-left: 20px;
}
.t-vol,
.t-batt {
  margin-left: 9px;
}
.clock {
  width: 88px;
  margin-left: 10px;
  text-align: right;
  line-height: 20px;
  white-space: nowrap;
  font-size: 14.800px;
}
</style>
